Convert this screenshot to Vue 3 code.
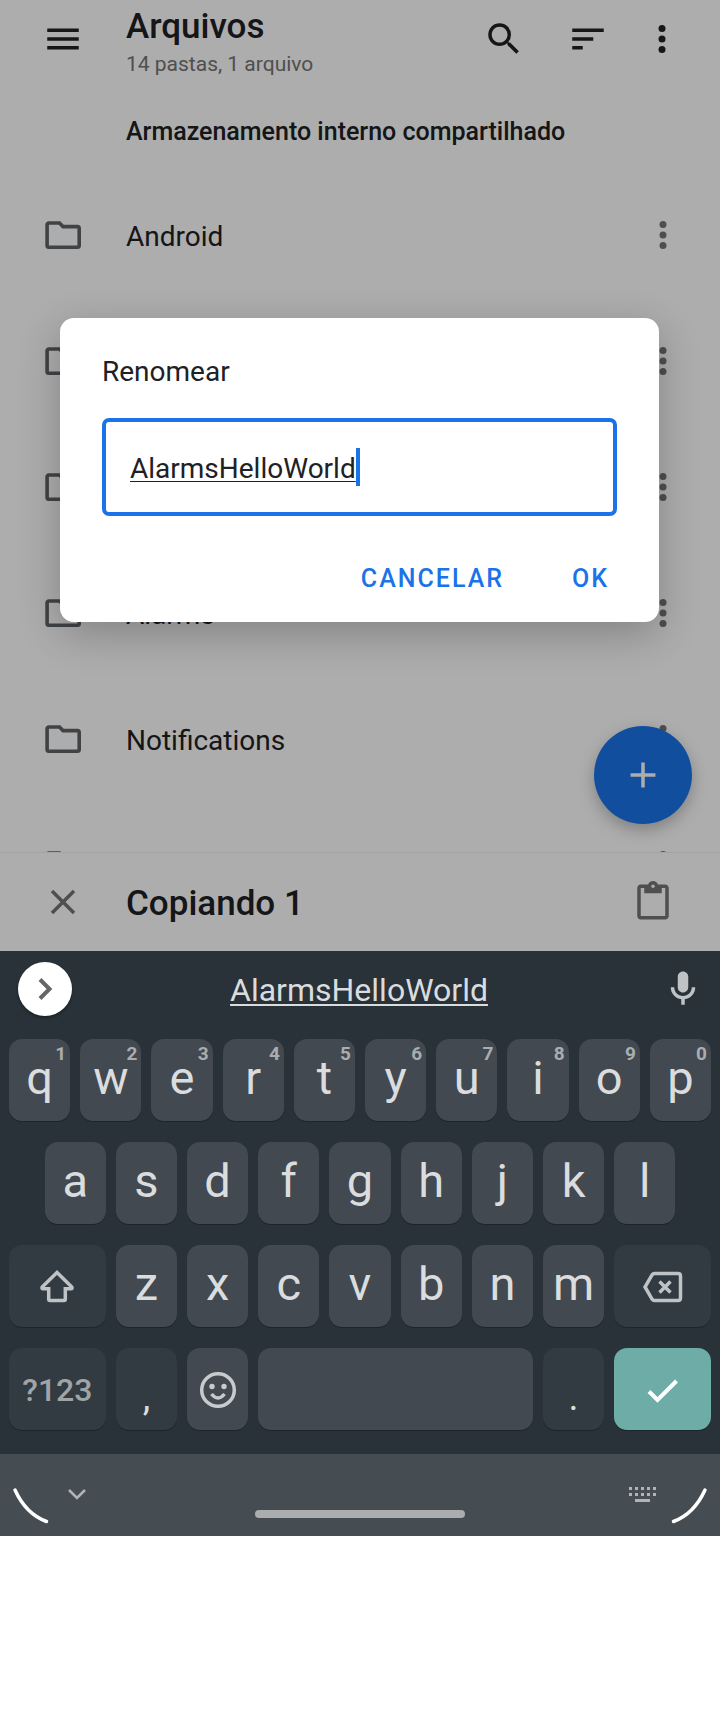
<script setup>
import { ref } from 'vue'

const name = ref('AlarmsHelloWorld')

const folders = [
  { id: 1, label: 'Android' },
  { id: 2, label: '' },
  { id: 3, label: '' },
  { id: 4, label: 'Alarms' },
  { id: 5, label: 'Notifications' },
  { id: 6, label: '' },
]

const letters = (text) => text.split('').map((c) => ({ id: c, text: c }))

const keys = [
  ...'qwertyuiop'.split('').map((c, i) => ({ id: c, text: c, hint: String((i + 1) % 10) })),
  ...letters('asdfghjkl').map((k, i) => (i === 0 ? { ...k, kind: 'indent' } : k)),
  { id: 'shift', icon: 'shift', kind: 'wide dim row-start', label: 'Shift' },
  ...letters('zxcvbnm'),
  { id: 'delete', icon: 'delete', kind: 'wide dim', label: 'Apagar' },
  { id: 'symbols', text: '?123', kind: 'wide dim symbols' },
  { id: 'comma', text: ',', kind: 'dim mark' },
  { id: 'emoji', icon: 'emoji', label: 'Emoji' },
  { id: 'space', kind: 'space', label: 'Espaço' },
  { id: 'period', text: '.', kind: 'dim mark' },
  { id: 'enter', icon: 'enter', kind: 'wide enter', label: 'Concluir' },
]
</script>

<template>
  <main class="phone">
    <section class="screen">
      <header class="toolbar">
        <button class="icon-button" aria-label="Menu">
          <svg class="icon" viewBox="0 0 24 24"><path d="M3 18h18v-2H3v2zm0-5h18v-2H3v2zm0-7v2h18V6H3z" /></svg>
        </button>
        <div class="heading">
          <h1>Arquivos</h1>
          <p>14 pastas, 1 arquivo</p>
        </div>
        <div class="tools">
          <button class="icon-button" aria-label="Pesquisar">
            <svg class="icon" viewBox="0 0 24 24"><path d="M15.5 14h-.79l-.28-.27A6.47 6.47 0 0 0 16 9.5 6.5 6.5 0 1 0 9.500 16c1.610 0 3.090-.59 4.230-1.570l.27.28v.79l5 4.990L20.490 19l-4.990-5zm-6 0C7.010 14 5 11.990 5 9.500S7.010 5 9.500 5 14 7.010 14 9.500 11.990 14 9.500 14z" /></svg>
          </button>
          <button class="icon-button" aria-label="Ordenar">
            <svg class="icon" viewBox="0 0 24 24"><path d="M3 18h6v-2H3v2zM3 6v2h18V6H3zm0 7h12v-2H3v2z" /></svg>
          </button>
          <button class="icon-button more" aria-label="Mais opções">
            <svg class="icon" viewBox="0 0 24 24"><circle cx="12" cy="6" r="2" /><circle cx="12" cy="12" r="2" /><circle cx="12" cy="18" r="2" /></svg>
          </button>
        </div>
      </header>

      <h2>Armazenamento interno compartilhado</h2>

      <div class="files">
        <ul>
          <li v-for="folder in folders" :key="folder.id">
            <svg class="icon folder" viewBox="0 0 42 42">
              <path d="M6.800 9H17.500l3.500 3.600H35.500a1.700 1.700 0 0 1 1.700 1.700V31.500a1.700 1.700 0 0 1-1.700 1.700H6.800a1.700 1.700 0 0 1-1.700-1.700V10.700A1.700 1.700 0 0 1 6.800 9z" />
            </svg>
            <span class="folder-name">{{ folder.label }}</span>
            <button class="icon-button row-more" aria-label="Opções da pasta">
              <svg class="icon" viewBox="0 0 24 24"><circle cx="12" cy="6" r="2" /><circle cx="12" cy="12" r="2" /><circle cx="12" cy="18" r="2" /></svg>
            </button>
          </li>
        </ul>
        <button class="fab" aria-label="Adicionar">
          <svg class="icon" viewBox="0 0 24 24"><path d="M19.100 13h-6.100v6.100h-2V13H4.900v-2H11V4.900h2V11h6.100z" /></svg>
        </button>
      </div>

      <footer class="copy-bar">
        <button class="icon-button soft" aria-label="Cancelar cópia">
          <svg class="icon" viewBox="0 0 24 24"><path d="M19 6.410 17.590 5 12 10.590 6.410 5 5 6.410 10.590 12 5 17.590 6.410 19 12 13.410 17.590 19 19 17.590 13.410 12z" /></svg>
        </button>
        <strong>Copiando 1</strong>
        <button class="icon-button soft" aria-label="Colar">
          <svg class="icon" viewBox="0 0 24 24"><path d="M19 2h-4.180C14.400.84 13.300 0 12 0S9.600.84 9.180 2H5c-1.100 0-2 .9-2 2v16c0 1.100.9 2 2 2h14c1.100 0 2-.9 2-2V4c0-1.100-.9-2-2-2zm-7 0c.55 0 1 .45 1 1s-.45 1-1 1-1-.45-1-1 .45-1 1-1zm7 18H5V4h2v3h10V4h2v16z" /></svg>
        </button>
      </footer>

      <div class="scrim">
        <form class="dialog" role="dialog" aria-labelledby="rename-label" @submit.prevent>
          <label id="rename-label" for="rename">Renomear</label>
          <div class="field">
            <input id="rename" v-model="name" type="text" spellcheck="false" autocomplete="off" />
            <span class="caret"></span>
          </div>
          <div class="actions">
            <button type="button">CANCELAR</button>
            <button type="submit">OK</button>
          </div>
        </form>
      </div>
    </section>

    <section class="keyboard">
      <div class="suggestions">
        <button class="expand" aria-label="Expandir">
          <svg class="icon" viewBox="0 0 42 42"><path d="m16 11.500 9.500 9.500-9.500 9.500" /></svg>
        </button>
        <button class="suggestion">{{ name }}</button>
        <button class="icon-button mic" aria-label="Voz">
          <svg class="icon" viewBox="0 0 24 24"><path d="M12 14c1.660 0 3-1.340 3-3V5c0-1.660-1.340-3-3-3S9 3.340 9 5v6c0 1.660 1.340 3 3 3zm5-3c0 2.760-2.240 5-5 5s-5-2.240-5-5H5c0 3.530 2.610 6.430 6 6.920V21h2v-3.080c3.390-.49 6-3.390 6-6.920h-2z" /></svg>
        </button>
      </div>

      <div class="keys">
        <button v-for="key in keys" :key="key.id" class="key" :class="key.kind" :aria-label="key.label">
          <span v-if="key.text">{{ key.text }}</span>
          <span v-if="key.hint" class="hint">{{ key.hint }}</span>
          <svg v-if="key.icon === 'shift'" class="icon line" viewBox="0 0 42 42">
            <path d="M21 6.500 6.200 21q-.9 1.800 1 1.800h5.500v10.500q0 1.300 1.300 1.300h14q1.300 0 1.300-1.300V22.800h5.500q1.900 0 1-1.800z" />
          </svg>
          <svg v-if="key.icon === 'delete'" class="icon line" viewBox="0 0 42 42">
            <path d="M12.500 7.500H36q2.500 0 2.500 2.500v22q0 2.500-2.500 2.500H12.500q-1.500 0-2.300-1.200L3 21l7.200-12.300q.8-1.200 2.300-1.200zM17.500 15.500l11 11m0-11-11 11" />
          </svg>
          <svg v-if="key.icon === 'emoji'" class="icon emoji" viewBox="0 0 42 42">
            <circle class="ring" cx="21" cy="21" r="16.300" />
            <circle cx="15" cy="17.500" r="2.700" /><circle cx="27" cy="17.500" r="2.700" />
            <path class="ring" d="M14.500 25q6.500 8 13 0" />
          </svg>
          <svg v-if="key.icon === 'enter'" class="icon check" viewBox="0 0 42 42">
            <path d="m7 22.500 8.500 8.500L34.500 12" />
          </svg>
        </button>
      </div>
    </section>

    <nav class="system-bar">
      <div class="side">
        <svg class="corner" viewBox="0 0 38 38"><path d="M3 4Q14 28 34.500 35.500" /></svg>
        <svg class="chevron" viewBox="0 0 26 16"><path d="m5 4 8 8 8-8" /></svg>
      </div>
      <span class="handle"></span>
      <div class="side end">
        <svg class="mini-keyboard" viewBox="0 0 28 16">
          <path d="M1 1h3v3H1zM7 1h3v3H7zM13 1h3v3h-3zM19 1h3v3h-3zM25 1h3v3h-3zM1 7h3v3H1zM7 7h3v3H7zM13 7h3v3h-3zM19 7h3v3h-3zM25 7h3v3h-3zM7 13h15v3H7z" />
        </svg>
        <svg class="corner" viewBox="0 0 38 38"><path d="M35 4Q24 28 3.500 35.500" /></svg>
      </div>
    </nav>
  </main>
</template>

<style>
body {
  background: #fff;
}
</style>

<style scoped>
.phone {
  font-family: Roboto, "Liberation Sans", sans-serif;
  color: #202124;
}

button {
  margin: 0;
  padding: 0;
  border: 0;
  background: none;
  color: inherit;
  font: inherit;
}

h1,
h2,
p,
ul {
  margin: 0;
  padding: 0;
}

.icon {
  display: block;
  flex: none;
  width: 42px;
  height: 42px;
  fill: currentColor;
}

.icon-button {
  flex: none;
}

.screen {
  position: relative;
  background: #fff;
}

.toolbar {
  display: flex;
  align-items: flex-start;
  height: 104px;
  box-sizing: border-box;
  padding: 6px 37px 0 42px;
}

.toolbar > .icon-button,
.tools {
  margin-top: 12px;
}

.heading {
  flex: 1;
  margin-left: 42px;
}

h1 {
  font-size: 35px;
  line-height: 42px;
  font-weight: 500;
}

.heading p {
  color: #757575;
  font-size: 21px;
  line-height: 32px;
}

.tools {
  display: flex;
  gap: 42px;
}

.tools .more {
  margin-left: -10px;
}

h2 {
  padding: 8px 42px 20px 126px;
  font-size: 25px;
  line-height: 40px;
  font-weight: 500;
}

.files {
  position: relative;
}

ul {
  max-height: 680px;
  overflow: hidden;
  list-style: none;
}

li {
  display: flex;
  align-items: center;
  height: 126px;
  padding: 0 36px 0 42px;
}

.folder {
  fill: none;
  stroke: #5f6368;
  stroke-width: 3.600;
}

.folder-name {
  flex: 1;
  margin-left: 42px;
  padding-top: 4px;
  font-size: 28px;
  line-height: 36px;
}

.row-more {
  color: #757575;
}

.fab {
  position: absolute;
  right: 28px;
  bottom: 28px;
  display: flex;
  align-items: center;
  justify-content: center;
  width: 98px;
  height: 98px;
  border-radius: 50%;
  background: #1a73e8;
  color: #fff;
  box-shadow: 0 6px 16px rgba(0, 0, 0, 0.26);
}

.copy-bar {
  display: flex;
  align-items: center;
  height: 98px;
  border-top: 1px solid #f0f0f0;
  padding: 0 46px 0 42px;
}

.copy-bar strong {
  flex: 1;
  margin-left: 42px;
  padding-top: 4px;
  font-size: 35px;
  line-height: 42px;
  font-weight: 500;
}

.soft {
  color: #757575;
}

.scrim {
  position: absolute;
  inset: 0;
  display: flex;
  align-items: center;
  justify-content: center;
  padding: 0 61px 12px 60px;
  background: rgba(0, 0, 0, 0.32);
}

.dialog {
  flex: 1;
  padding: 36px 42px 20px;
  border-radius: 14px;
  background: #fff;
  box-shadow: 0 12px 42px rgba(0, 0, 0, 0.24);
}

.dialog label {
  display: block;
  margin-bottom: 28px;
  font-size: 28px;
  line-height: 36px;
}

.field {
  display: flex;
  align-items: center;
  height: 90px;
  padding: 0 24px;
  border: 4px solid #1a73e8;
  border-radius: 7px;
}

.field input {
  field-sizing: content;
  max-width: 100%;
  margin: 0;
  padding: 4px 0 0;
  border: 0;
  outline: 0;
  background: none;
  color: inherit;
  font-family: inherit;
  font-size: 28px;
  line-height: 36px;
  text-decoration: underline;
  text-decoration-thickness: 1px;
  text-underline-offset: 3px;
}

.caret {
  width: 4px;
  height: 38px;
  background: #1a73e8;
}

.actions {
  display: flex;
  justify-content: flex-end;
  gap: 12px;
  margin: 38px -20px 0 0;
}

.actions button {
  height: 48px;
  padding: 2px 28px 0;
  color: #1a73e8;
  font-size: 25px;
  font-weight: 500;
  letter-spacing: 2px;
}

.keyboard {
  padding-bottom: 24px;
  background: #283238;
  color: #dadcde;
}

.suggestions {
  display: grid;
  grid-template-columns: 1fr auto 1fr;
  align-items: center;
  height: 76px;
  padding: 0 16px 12px 14px;
}

.expand {
  display: flex;
  align-items: center;
  justify-content: center;
  width: 54px;
  height: 54px;
  margin-left: 4px;
  border-radius: 50%;
  background: #fff;
  box-shadow: 0 2px 3px rgba(0, 0, 0, 0.3);
}

.expand .icon {
  fill: none;
  stroke: #666;
  stroke-width: 4;
}

.suggestion {
  padding-top: 2px;
  font-size: 32px;
  line-height: 40px;
  text-decoration: underline;
  text-decoration-thickness: 2px;
  text-underline-offset: 3px;
}

.mic {
  justify-self: end;
  color: #bfc3c6;
}

.keys {
  display: grid;
  grid-template-columns: repeat(20, 1fr);
  gap: 21px 10px;
  padding: 0 9px;
}

.key {
  position: relative;
  display: flex;
  align-items: center;
  justify-content: center;
  grid-column: span 2;
  min-width: 0;
  height: 82px;
  padding-bottom: 4px;
  border-radius: 13px;
  background: #424950;
  box-shadow: 0 1px 0 #1c252b;
  font-size: 47px;
  line-height: 36px;
}

.key:has(.icon) {
  padding: 2px 0 0;
}

.key.indent {
  grid-column: 2 / span 2;
}

.key.wide {
  grid-column: span 3;
}

.key.row-start {
  grid-column: 1 / span 3;
}

.key.space {
  grid-column: span 8;
}

.key.dim {
  background: #313b41;
}

.key.symbols {
  padding: 2px 0 0;
  color: #a0a4a7;
  font-size: 32px;
  font-weight: 500;
}

.key.mark {
  padding: 16px 0 0;
  font-size: 38px;
}

.key.enter {
  background: #6eaca8;
  color: #fff;
}

.hint {
  position: absolute;
  top: 5px;
  right: 4px;
  color: #a9adb0;
  font-size: 19px;
  line-height: 19px;
  font-weight: 700;
}

.line,
.check {
  fill: none;
  stroke: #bfc3c6;
  stroke-width: 3.500;
}

.check {
  stroke: #fff;
  stroke-width: 4;
}

.emoji {
  color: #c8cbcd;
}

.ring {
  fill: none;
  stroke: currentColor;
  stroke-width: 3.500;
}

.system-bar {
  display: grid;
  grid-template-columns: 1fr auto 1fr;
  align-items: start;
  padding: 32px 12px 12px;
  background: #464d52;
}

.side {
  display: flex;
  align-items: flex-start;
  gap: 14px;
}

.end {
  justify-content: flex-end;
}

.corner {
  width: 38px;
  height: 38px;
  fill: none;
  stroke: #fff;
  stroke-width: 3.500;
  stroke-linecap: round;
}

.chevron {
  width: 26px;
  height: 16px;
  fill: none;
  stroke: #b0b4b7;
  stroke-width: 2.500;
}

.mini-keyboard {
  width: 28px;
  height: 16px;
  fill: #b0b4b7;
}

.handle {
  width: 210px;
  height: 8px;
  margin-top: 24px;
  border-radius: 4px;
  background: #a9adb0;
}
</style>
